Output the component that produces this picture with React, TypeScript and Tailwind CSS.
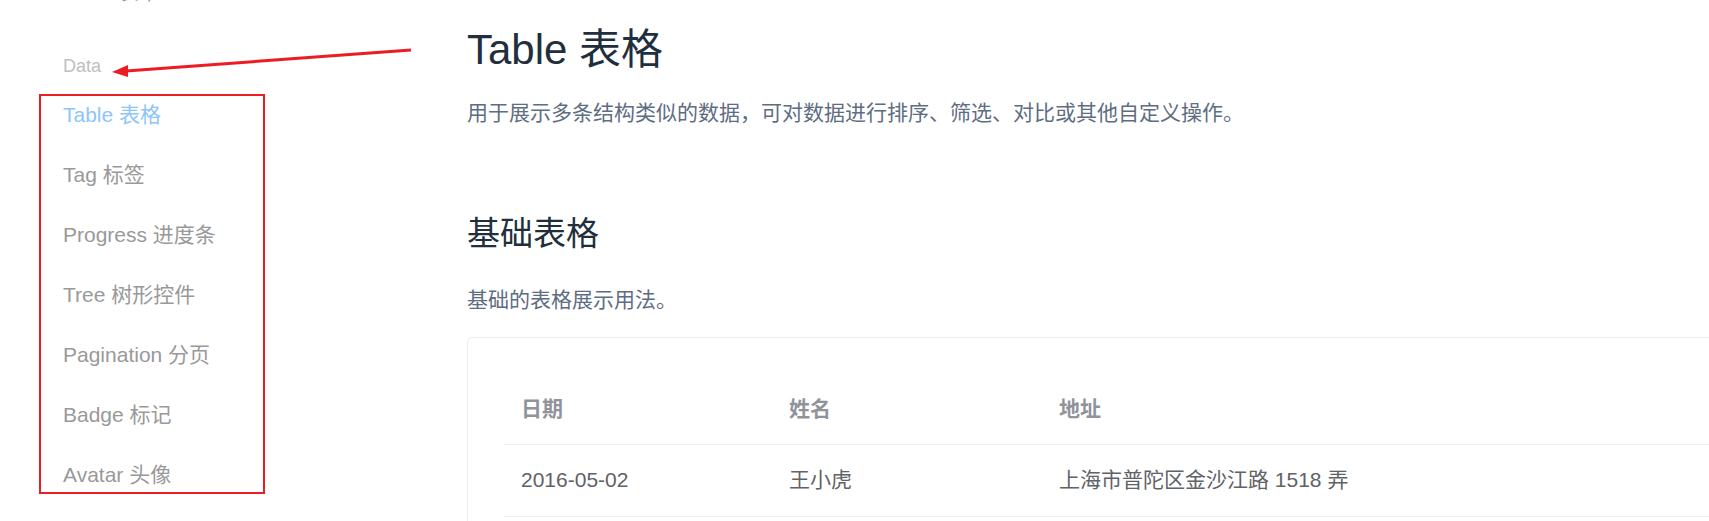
import React from 'react';

const font = "font-['Liberation_Sans','Noto_Sans_CJK_SC',sans-serif]";

const navItems = [
  { id: 'table', label: 'Table 表格', active: true },
  { id: 'tag', label: 'Tag 标签' },
  { id: 'progress', label: 'Progress 进度条' },
  { id: 'tree', label: 'Tree 树形控件' },
  { id: 'pagination', label: 'Pagination 分页' },
  { id: 'badge', label: 'Badge 标记' },
  { id: 'avatar', label: 'Avatar 头像' },
];

const rows = [{ date: '2016-05-02', name: '王小虎', address: '上海市普陀区金沙江路 1518 弄' }];

function Sidebar() {
  return (
    <aside className="w-[467px] shrink-0 pl-[63px]">
      {/* previous group, scrolled off the top */}
      <div className="mt-[-38px] text-[21px] leading-[60px] text-[#999]">Form 表单</div>
      <div className="mt-[31px] text-[18px] leading-[27px] text-[#c0c0c0]">Data</div>
      <ul className="mt-[5px]">
        {navItems.map((item) => (
          <li
            key={item.id}
            className={`text-[21px] leading-[60px] ${item.active ? 'text-[#8ec5fb]' : 'text-[#999]'}`}
          >
            {item.label}
          </li>
        ))}
      </ul>
    </aside>
  );
}

function BasicTable() {
  return (
    <div className="mt-[21px] min-h-[300px] rounded-[5px] border border-[#ebebeb] px-[36px] pt-[36px]">
      <div className="grid grid-cols-[268px_270px_1fr] border-b border-[#ebeef5] py-[18px] text-[21px] font-bold leading-[34.5px] text-[#909399]">
        <div className="pl-[17px]">日期</div>
        <div className="pl-[17px]">姓名</div>
        <div className="pl-[17px]">地址</div>
      </div>
      {rows.map((r) => (
        <div
          key={r.date}
          className="grid grid-cols-[268px_270px_1fr] border-b border-[#ebeef5] py-[18px] text-[21px] leading-[34.5px] text-[#606266]"
        >
          <div className="pl-[17px]">{r.date}</div>
          <div className="pl-[17px]">{r.name}</div>
          <div className="pl-[17px]">{r.address}</div>
        </div>
      ))}
    </div>
  );
}

export default function App() {
  return (
    <div className={`relative h-[521px] w-[1709px] overflow-hidden bg-white ${font}`}>
      <div className="flex">
        <Sidebar />
        <main className="w-[1400px] shrink-0">
          <h2 className="mt-[18px] text-[42px] font-normal leading-[63px] text-[#1f2f3d]">Table 表格</h2>
          <p className="mt-[16px] text-[21px] leading-[31.5px] text-[#5e6d82]">
            用于展示多条结构类似的数据，可对数据进行排序、筛选、对比或其他自定义操作。
          </p>
          <h3 className="mt-[80px] text-[33px] font-normal leading-[49.5px] text-[#1f2f3d]">基础表格</h3>
          <p className="mt-[26px] text-[21px] leading-[31.5px] text-[#5e6d82]">基础的表格展示用法。</p>
          <BasicTable />
        </main>
      </div>

      {/* annotation overlay */}
      <div className="pointer-events-none absolute left-[39px] top-[94px] h-[400px] w-[226px] border-2 border-[#ec1c24]" />
      <svg className="pointer-events-none absolute left-0 top-0" width="1709" height="521">
        <line x1="411" y1="50" x2="126" y2="71" stroke="#ec1c24" strokeWidth="3" />
        <polygon points="112,72 128,65 128,77" fill="#ec1c24" />
      </svg>
    </div>
  );
}
